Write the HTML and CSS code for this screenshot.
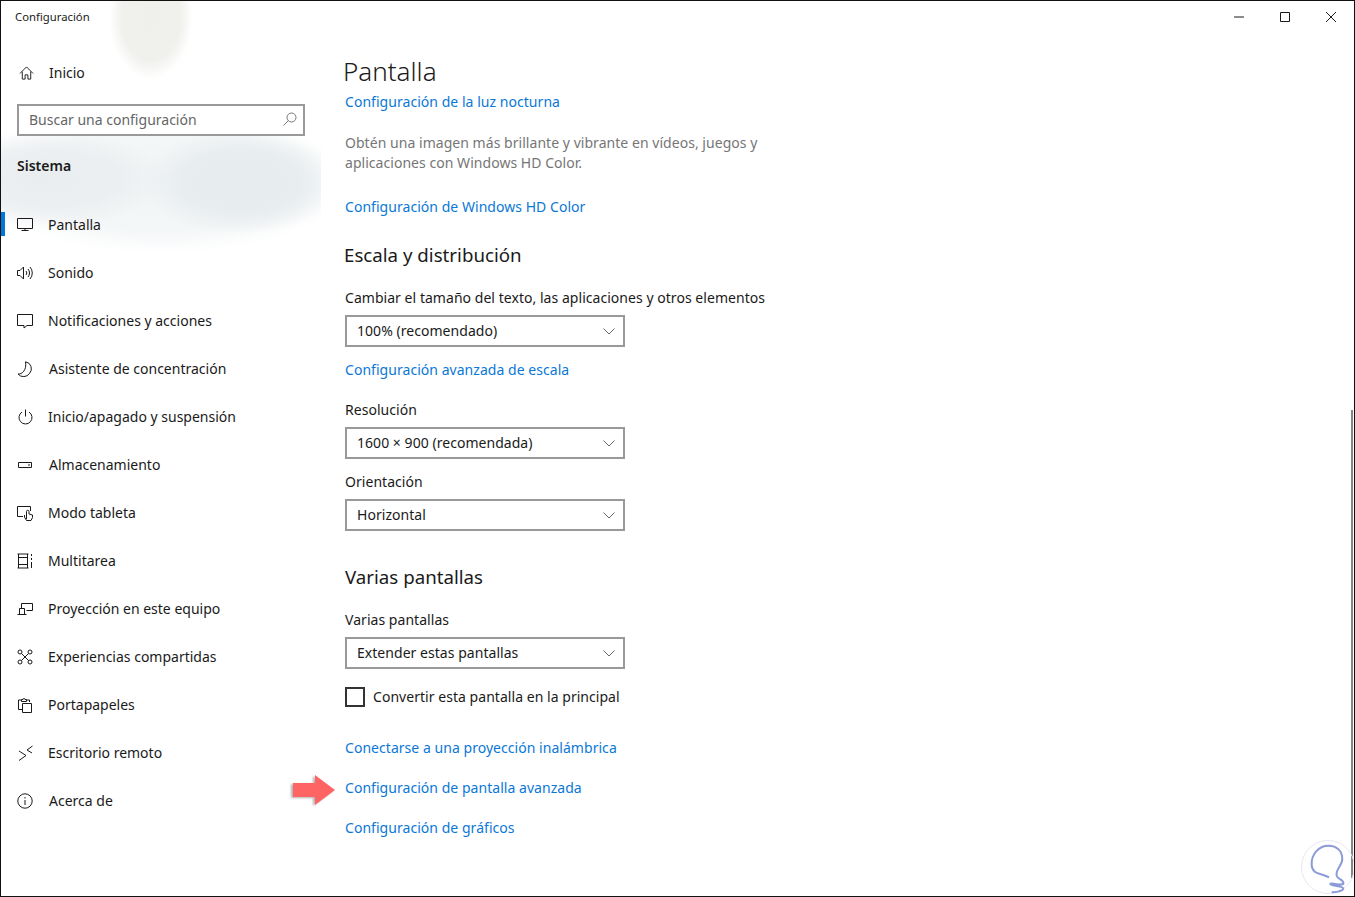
FILE: index.html
```html
<!DOCTYPE html>
<html lang="es">
<head>
    <meta charset="UTF-8">
    <meta name="viewport" content="width=device-width, initial-scale=1.0">
    <title>Configuración</title>
    <link rel="stylesheet" href="styles.css">
</head>
<body>
    <div class="window">
        <!-- Title bar -->
        <div class="titlebar">
            <span class="app-title">Configuración</span>
            <div class="win-buttons">
                <div class="win-btn"><svg width="12" height="12" viewBox="0 0 12 12"><path d="M1 6h10"/></svg></div>
                <div class="win-btn"><svg width="12" height="12" viewBox="0 0 12 12"><path d="M1.5 1.5h9v9h-9z"/></svg></div>
                <div class="win-btn"><svg width="12" height="12" viewBox="0 0 12 12"><path d="M1 1l10 10M11 1L1 11"/></svg></div>
            </div>
        </div>

        <div class="content">
            <!-- Sidebar -->
            <aside class="sidebar">
                <div class="nav-item nudge home">
                    <svg class="icon" viewBox="0 0 16 16"><path d="M1 8.5L8 1.5l7 7M3.5 6.5v8h3v-4.5h3v4.5h3v-8"/></svg>
                    <span>Inicio</span>
                </div>
                <div class="search">
                    <span>Buscar una configuración</span>
                    <svg width="16" height="16" viewBox="0 0 16 16"><circle cx="9.5" cy="6.5" r="4.5"/><path d="M6.3 9.7L1.5 14.5"/></svg>
                </div>
                <div class="section-title">Sistema</div>
                <nav class="nav-list">
                    <div class="nav-item active">
                        <svg class="icon" viewBox="0 0 16 16"><path d="M.5 1.5h15v10H.5zM8 11.5v2M4.5 13.5h7"/></svg>
                        <span>Pantalla</span>
                    </div>
                    <div class="nav-item">
                        <svg class="icon" viewBox="0 0 16 16"><path d="M.5 5.5h2.5L6.5 2v12L3 10.500H.5zM9 6a3 3 0 0 1 0 4M11 4a6 6 0 0 1 0 8M13 2a9 9 0 0 1 0 12"/></svg>
                        <span>Sonido</span>
                    </div>
                    <div class="nav-item">
                        <svg class="icon" viewBox="0 0 16 16"><path d="M.5 1.500h15v11h-5.500L7 15v-2.500H.5z"/></svg>
                        <span>Notificaciones y acciones</span>
                    </div>
                    <div class="nav-item nudge">
                        <svg class="icon" viewBox="0 0 16 16"><path d="M8.500.8a7 7 0 0 1 4 11.700A7.200 7.200 0 0 1 1 13c4 .5 9-4 7.500-12.200z"/></svg>
                        <span>Asistente de concentración</span>
                    </div>
                    <div class="nav-item">
                        <svg class="icon" viewBox="0 0 16 16"><path d="M8.500 .5v7M5 3a6.500 6.500 0 1 0 7 0"/></svg>
                        <span>Inicio/apagado y suspensión</span>
                    </div>
                    <div class="nav-item nudge">
                        <svg class="icon" viewBox="0 0 16 16"><path d="M1.500 5.500h13v5h-13zM11 8h2"/></svg>
                        <span>Almacenamiento</span>
                    </div>
                    <div class="nav-item">
                        <svg class="icon" viewBox="0 0 16 16"><path d="M6 11.500H.5v-10h13V6M9.500 14V6.500a1.200 1.200 0 0 1 2.500 0V9l3.500 1v2.500l-1.500 3H9.500l-2-3.500V10"/></svg>
                        <span>Modo tableta</span>
                    </div>
                    <div class="nav-item">
                        <svg class="icon" viewBox="0 0 16 16"><path d="M.5 1h11M.5 15h11M1.500 1v14M10.500 1v14M1.500 4.500h9M1.500 11.500h9M14.500 1v2M14.500 5v2M14.500 9v6"/></svg>
                        <span>Multitarea</span>
                    </div>
                    <div class="nav-item">
                        <svg class="icon" viewBox="0 0 16 16"><path d="M4.500 7V2.500h11v7H9.500M.5 13.500h9M2.500 13.500v-6h5v6"/></svg>
                        <span>Proyección en este equipo</span>
                    </div>
                    <div class="nav-item">
                        <svg class="icon" viewBox="0 0 16 16"><circle cx="3" cy="3" r="2"/><circle cx="13" cy="3" r="2"/><circle cx="3" cy="13" r="2"/><circle cx="13" cy="13" r="2"/><path d="M4.500 4.500l7 7M11.500 4.500l-7 7"/></svg>
                        <span>Experiencias compartidas</span>
                    </div>
                    <div class="nav-item">
                        <svg class="icon" viewBox="0 0 16 16"><path d="M5.500 12.500h-4V3h3M9.500 3h3v2M4.500 4.500v-2h1.500a1 1 0 0 1 2 0h1.500v2zM5.500 6.500h9v9h-9z"/></svg>
                        <span>Portapapeles</span>
                    </div>
                    <div class="nav-item">
                        <svg class="icon" viewBox="0 0 16 16"><path d="M2 6l7 4.500-7 5M15.500 1L10 5l5 3"/></svg>
                        <span>Escritorio remoto</span>
                    </div>
                    <div class="nav-item nudge">
                        <svg class="icon" viewBox="0 0 16 16"><circle cx="8" cy="8" r="7.200"/><path d="M8 7v5M8 4v1.500"/></svg>
                        <span>Acerca de</span>
                    </div>
                </nav>
            </aside>

            <!-- Main panel -->
            <main class="main">
                <h1 class="page-title">Pantalla</h1>
                <a class="link first-link">Configuración de la luz nocturna</a>
                <p class="hint">Obtén una imagen más brillante y vibrante en vídeos, juegos y<br>aplicaciones con Windows HD Color.</p>
                <a class="link hd-link">Configuración de Windows HD Color</a>

                <h2 class="sub-title scale-title">Escala y distribución</h2>
                <div class="label">Cambiar el tamaño del texto, las aplicaciones y otros elementos</div>
                <div class="dropdown">
                    <span>100% (recomendado)</span>
                    <svg width="12" height="7" viewBox="0 0 12 7"><path d="M.5.5L6 6l5.500-5.500"/></svg>
                </div>
                <a class="link scale-link">Configuración avanzada de escala</a>
                <div class="label res-label">Resolución</div>
                <div class="dropdown">
                    <span>1600 × 900 (recomendada)</span>
                    <svg width="12" height="7" viewBox="0 0 12 7"><path d="M.5.5L6 6l5.500-5.500"/></svg>
                </div>
                <div class="label orient-label">Orientación</div>
                <div class="dropdown">
                    <span>Horizontal</span>
                    <svg width="12" height="7" viewBox="0 0 12 7"><path d="M.5.5L6 6l5.500-5.500"/></svg>
                </div>

                <h2 class="sub-title multi-title">Varias pantallas</h2>
                <div class="label">Varias pantallas</div>
                <div class="dropdown">
                    <span>Extender estas pantallas</span>
                    <svg width="12" height="7" viewBox="0 0 12 7"><path d="M.5.5L6 6l5.500-5.500"/></svg>
                </div>
                <div class="check-row">
                    <div class="checkbox"></div>
                    <span>Convertir esta pantalla en la principal</span>
                </div>
                <a class="link wireless-link">Conectarse a una proyección inalámbrica</a>
                <a class="link bottom-link">Configuración de pantalla avanzada</a>
                <a class="link bottom-link">Configuración de gráficos</a>
            </main>
        </div>

        <!-- Overlays on top of the screenshot -->
        <svg class="arrow" width="48" height="36" viewBox="0 0 48 36"><path d="M2 9h22V1l20 15-20 15v-8H2z"/></svg>
        <div class="scrollbar"></div>
        <svg class="logo" width="55" height="57" viewBox="0 0 55 57">
            <circle cx="28" cy="28" r="26.500"/>
            <path d="M29 38.300C22 34 12 36 11.700 26 11 14 20 6.700 28.300 6.700 37 6.700 42.300 12 42.300 20c0 7-7 10-5.600 16.700 1 4 8 4 6.600 8.300-6 2-13-2-13 0 2 3 13 1 13 5-2 3-7 3-11.600 3.300"/>
        </svg>
    </div>
</body>
</html>
```

FILE: styles.css
```css
/* General styles */
* {
    box-sizing: border-box;
}

body {
    margin: 0;
    font-family: "Noto Sans", "Open Sans", sans-serif;
    font-size: 14px;
    color: #1a1a1a;
    background: #fff;
}

svg {
    fill: none;
    stroke: #1a1a1a;
    stroke-width: 1;
    flex-shrink: 0;
}

.window {
    position: relative;
    width: 1355px;
    height: 897px;
    overflow: hidden;
    border: 1px solid #111;
    background-color: #fff;
    background-image:
        radial-gradient(ellipse 100px 52px at 240px 181px, #e6ecee 0%, #e8edef 60%, rgba(232, 237, 239, 0) 100%),
        radial-gradient(ellipse 130px 48px at 40px 178px, #e9edef 0%, rgba(233, 237, 239, 0.75) 60%, rgba(233, 237, 239, 0) 100%),
        radial-gradient(ellipse 190px 72px at 160px 180px, rgba(241, 244, 245, 0.9) 0%, rgba(241, 244, 245, 0.8) 70%, rgba(241, 244, 245, 0) 100%),
        radial-gradient(ellipse 42px 62px at 150px 16px, #eff0ec 0%, #f0f1ed 70%, rgba(241, 242, 238, 0) 100%);
    background-size: 320px 260px;
    background-repeat: no-repeat;
}

/* Title bar */
.titlebar {
    display: flex;
    justify-content: space-between;
    height: 31px;
}

.app-title {
    padding: 7px 0 0 14px;
    font-size: 11.3px;
    line-height: 18px;
}

.win-buttons {
    display: flex;
}

.win-btn {
    display: flex;
    justify-content: center;
    align-items: center;
    width: 46px;
}

.content {
    display: flex;
}

/* Sidebar */
.sidebar {
    width: 320px;
    padding-top: 17px;
}

.nav-item {
    position: relative;
    display: flex;
    align-items: center;
    gap: 15px;
    height: 48px;
    padding-left: 16px;
    line-height: 20px;
}

.nav-item.nudge {
    gap: 16px;
}

.nav-item.home .icon {
    width: 15px;
    margin-left: 2px;
}

.nav-item.home {
    gap: 15px;
}

.nav-item.active::before {
    content: "";
    position: absolute;
    left: 0;
    top: 11px;
    width: 4px;
    height: 24px;
    background: #0078d7;
}

.icon {
    width: 16px;
    height: 16px;
}

.search {
    display: flex;
    justify-content: space-between;
    align-items: center;
    width: 288px;
    height: 32px;
    margin: 7px 0 0 16px;
    padding: 0 5px 2px 10px;
    border: 2px solid #999;
    background: #fff;
    color: #666;
}

.search svg {
    stroke: #777;
}

.section-title {
    margin: 20px 0 0 16px;
    font-weight: 600;
    line-height: 20px;
}

.nav-list {
    margin-top: 25px;
}

/* Main panel */
.main {
    display: flex;
    flex-direction: column;
    align-items: flex-start;
    padding-left: 24px;
    line-height: 20px;
    letter-spacing: 0.04px;
}

.page-title {
    margin: 19px 0 0 -2px;
    font-size: 26px;
    font-weight: 300;
    line-height: 40px;
    letter-spacing: 0;
}

.sub-title {
    margin: 0;
    font-size: 18.7px;
    font-weight: 400;
    line-height: 28px;
    letter-spacing: 0;
}

.link {
    color: #0a78d7;
    cursor: pointer;
}

.first-link {
    margin-top: 1px;
}

.hint {
    margin: 21px 0 0;
    color: #767676;
}

.hd-link {
    margin-top: 24px;
}

.scale-title {
    margin: 24px 0 0 -1px;
}

.label {
    margin-top: 19px;
}

.dropdown {
    display: flex;
    justify-content: space-between;
    align-items: center;
    width: 280px;
    height: 32px;
    margin-top: 7px;
    padding: 0 8px 0 10px;
    border: 2px solid #999;
}

.dropdown svg {
    stroke: #666;
}

.scale-link {
    margin-top: 13px;
}

.res-label {
    margin-top: 20px;
}

.orient-label {
    margin-top: 13px;
}

.multi-title {
    margin-top: 32px;
}

.check-row {
    display: flex;
    align-items: center;
    gap: 8px;
    margin-top: 18px;
}

.checkbox {
    width: 20px;
    height: 20px;
    border: 2px solid #333;
}

.wireless-link {
    margin-top: 31px;
}

.bottom-link {
    margin-top: 20px;
}

/* Overlays */
.arrow {
    position: absolute;
    left: 290px;
    top: 773px;
    stroke: none;
    fill: #ff6464;
    filter: drop-shadow(-2px 1px 1px rgba(0, 0, 0, 0.3));
}

.scrollbar {
    position: absolute;
    right: 1px;
    top: 409px;
    width: 2px;
    height: 468px;
    background: #858585;
}

.logo {
    position: absolute;
    right: -1px;
    bottom: 0;
}

.logo circle {
    stroke: #e6e8f2;
}

.logo path {
    stroke: #8b9bd8;
    stroke-width: 2;
}
```
